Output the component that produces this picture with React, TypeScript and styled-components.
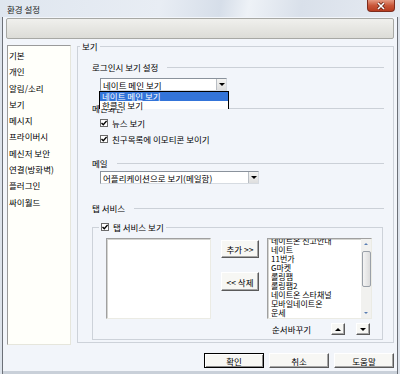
import React from 'react';
import styled, { createGlobalStyle } from 'styled-components';

const GlobalStyle = createGlobalStyle`
  html, body {
    margin: 0;
    padding: 0;
    background: #f2f5fa;
  }
  body {
    font-family: "Noto Sans CJK KR", "Noto Sans", sans-serif;
    font-size: 8.5px;
    color: #000;
  }
  * {
    box-sizing: border-box;
  }
`;

const Window = styled.div`
  width: 400px;
  height: 374px;
  display: flex;
  flex-direction: column;
  background: #f2f5fa;
  box-shadow: inset 2px 0 0 #dde3eb, inset 3px 0 0 #6c7077,
    inset -2px 0 0 #dde3eb, inset -3px 0 0 #6c7077, inset 0 -3px 0 #c9d0d9;
  overflow: hidden;
`;

const TitleBar = styled.div`
  height: 17px;
  display: flex;
  align-items: center;
  padding-left: 7px;
  background: linear-gradient(
    100deg,
    #dfe6ef 0%,
    #e8edf4 40%,
    #d6dee9 55%,
    #eef2f7 62%,
    #d9e0ea 75%,
    #e6ebf2 100%
  );
  color: #1c1c1c;
`;

const CloseButton = styled.div`
  margin-left: auto;
  margin-right: 5px;
  align-self: flex-start;
  width: 28px;
  height: 12px;
  border: 1px solid #7d2c1d;
  border-top: none;
  border-radius: 0 0 4px 4px;
  background: linear-gradient(#e59a83, #c9573a 50%, #b73b1f);
  display: flex;
  align-items: center;
  justify-content: center;
`;

const Banner = styled.div`
  height: 21px;
  margin: 1px 6px 0 6px;
  border: 1px solid #a7a8a4;
  border-radius: 2px;
  background: linear-gradient(#f0f0ed, #dcdcd7);
`;

const Body = styled.div`
  display: flex;
  align-items: flex-start;
  gap: 6px;
  padding-left: 7px;
  margin-top: 2px;
`;

const Sidebar = styled.div`
  width: 64px;
  height: 300px;
  margin-top: 4px;
  padding: 1px 1px;
  background: #fffffa;
  border: 1px solid;
  border-color: #9a9a9a #e6e6dc #e6e6dc #9a9a9a;
`;

const SideItem = styled.div`
  height: 16.3px;
  line-height: 16.3px;
  white-space: nowrap;
`;

const MainGroup = styled.fieldset`
  margin: 0;
  padding: 0 9px 0 2px;
  width: 317px;
  height: 302px;
  min-width: 0;
  border: 1px solid #cdd2d9;
`;

const Legend = styled.legend`
  padding: 0 2px;
  line-height: 10px;
  height: 10px;
  display: flex;
  align-items: center;
  gap: 4px;
`;

const Content = styled.div`
  display: flex;
  flex-direction: column;
  padding-left: 12px;
`;

const SectionHeader = styled.div<{ $top: number }>`
  display: flex;
  align-items: center;
  gap: 9px;
  height: 10px;
  margin-top: ${p => p.$top}px;
  white-space: nowrap;
`;

const Rule = styled.div`
  flex: 1;
  height: 1px;
  background: #cbd0d7;
`;

const ComboWrap = styled.div<{ $width: number; $top: number }>`
  position: relative;
  width: ${p => p.$width}px;
  margin-top: ${p => p.$top}px;
  margin-left: 8px;
`;

const Combo = styled.div`
  height: 13px;
  display: flex;
  align-items: center;
  background: #fff;
  border: 1px solid;
  border-color: #8a929c #d6dbe1 #d6dbe1 #8a929c;
  padding-left: 2px;
  white-space: nowrap;
`;

const ComboButton = styled.div`
  margin-left: auto;
  width: 10px;
  height: 100%;
  background: linear-gradient(#f4f4f2, #dedede);
  border-left: 1px solid #b9bec4;
  display: flex;
  align-items: center;
  justify-content: center;
`;

const Arrow = styled.span<{ $dir: 'up' | 'down'; $size: number; $color: string }>`
  width: 0;
  height: 0;
  border-left: ${p => p.$size}px solid transparent;
  border-right: ${p => p.$size}px solid transparent;
  ${p =>
    p.$dir === 'down'
      ? `border-top: ${p.$size}px solid ${p.$color};`
      : `border-bottom: ${p.$size}px solid ${p.$color};`}
`;

const DropList = styled.div`
  position: absolute;
  top: 13px;
  left: -1px;
  width: 130px;
  height: 18px;
  background: #fff;
  border: 1px solid #000;
  z-index: 2;
`;

const DropItem = styled.div<{ $selected?: boolean }>`
  height: 8px;
  line-height: 8px;
  padding-left: 2px;
  white-space: nowrap;
  background: ${p => (p.$selected ? '#3374d9' : '#fff')};
  color: ${p => (p.$selected ? '#fff' : '#000')};
  &:first-child {
    height: 9px;
    line-height: 9px;
  }
`;

const CheckRow = styled.div<{ $top: number }>`
  display: flex;
  align-items: center;
  gap: 4px;
  height: 10px;
  margin-top: ${p => p.$top}px;
  margin-left: 8px;
  white-space: nowrap;
`;

const CheckBox = styled.span`
  width: 8px;
  height: 8px;
  border: 1px solid #6b6b6b;
  background: #fff;
  display: flex;
  align-items: center;
  justify-content: center;
`;

const TabGroup = styled.fieldset`
  margin: 9px 0 0 0;
  padding: 0 0 0 6px;
  width: 291px;
  height: 118px;
  min-width: 0;
  align-self: flex-start;
  border: 1px solid #cdd2d9;
`;

const TabBody = styled.div`
  display: flex;
  align-items: flex-start;
  padding-left: 7px;
  margin-top: 6px;
`;

const ListBox = styled.div`
  width: 105px;
  height: 81px;
  background: #fff;
  border: 1px solid;
  border-color: #a0a0a0 #ebebe4 #ebebe4 #a0a0a0;
  box-shadow: inset 1px 1px 0 #d4d4d0;
  display: flex;
  overflow: hidden;
`;

const ButtonCol = styled.div`
  width: 38px;
  margin-left: 10px;
  margin-top: 2px;
  display: flex;
  flex-direction: column;
  gap: 14px;
`;

const Button = styled.div<{ $width?: number; $height: number; $default?: boolean }>`
  width: ${p => (p.$width ? `${p.$width}px` : '100%')};
  height: ${p => p.$height}px;
  display: flex;
  align-items: center;
  justify-content: center;
  white-space: nowrap;
  background: #f7f7f4;
  border: 1px solid;
  border-color: ${p => (p.$default ? '#000' : '#ffffff #5a5a5a #5a5a5a #ffffff')};
  box-shadow: ${p =>
    p.$default
      ? 'inset 1px 1px 0 #fff, inset -1px -1px 0 #8a8a8a'
      : 'inset -1px -1px 0 #a6a6a6'};
`;

const RightCol = styled.div`
  width: 105px;
  margin-left: 8px;
  display: flex;
  flex-direction: column;
`;

const Items = styled.div`
  flex: 1;
  padding-left: 3px;
  margin-top: -3px;
`;

const Item = styled.div`
  height: 9px;
  line-height: 9px;
  font-size: 8px;
  white-space: nowrap;
`;

const ScrollBar = styled.div`
  width: 10px;
  height: 100%;
  margin-top: 0;
  background: #f1f1ef;
  display: flex;
  flex-direction: column;
  align-items: center;
`;

const ScrollArrow = styled.div`
  height: 10px;
  width: 100%;
  display: flex;
  align-items: center;
  justify-content: center;
`;

const Thumb = styled.div`
  width: 9px;
  height: 36px;
  margin-top: 2px;
  border: 1px solid #9aa0a8;
  border-radius: 2px;
  background: linear-gradient(90deg, #f4f4f4, #dcdcdc);
`;

const Spacer = styled.div`
  flex: 1;
`;

const SortRow = styled.div`
  display: flex;
  align-items: center;
  height: 12px;
  margin-top: 4px;
  padding: 0 2px 0 5px;
  gap: 11px;
  white-space: nowrap;
`;

const SortLabel = styled.span`
  margin-right: auto;
`;

const Footer = styled.div`
  display: flex;
  justify-content: flex-end;
  gap: 5px;
  padding: 8px 6px 0 0;
`;

const sideItems = [
  '기본',
  '개인',
  '알림/소리',
  '보기',
  '메시지',
  '프라이버시',
  '메신저 보안',
  '연결(방화벽)',
  '플러그인',
  '싸이월드',
];

const tabItems = [
  '네이트온 신고안내',
  '네이트',
  '11번가',
  'G마켓',
  '롤링팸',
  '롤링팸2',
  '네이트온 스타채널',
  '모바일네이트온',
  '운세',
];

function Check() {
  return (
    <CheckBox>
      <svg width="6" height="6" viewBox="0 0 6 6">
        <path d="M0.5 3 L2.3 4.8 L5.6 1" fill="none" stroke="#000" strokeWidth="1.4" />
      </svg>
    </CheckBox>
  );
}

export default function App(): JSX.Element {
  return (
    <>
      <GlobalStyle />
      <Window>
        <TitleBar>
          환경 설정
          <CloseButton>
            <svg width="10" height="8" viewBox="0 0 10 8">
              <path d="M2 1 L8 7 M8 1 L2 7" stroke="#5a1a10" strokeWidth="3" />
              <path d="M2 1 L8 7 M8 1 L2 7" stroke="#fff" strokeWidth="1.6" />
            </svg>
          </CloseButton>
        </TitleBar>
        <Banner />

        <Body>
          <Sidebar>
            {sideItems.map(item => (
              <SideItem key={item}>{item}</SideItem>
            ))}
          </Sidebar>

          <MainGroup>
            <Legend>보기</Legend>
            <Content>
              <SectionHeader $top={11}>
                로그인시 보기 설정
                <Rule />
              </SectionHeader>
              <ComboWrap $width={127} $top={6}>
                <Combo>
                  네이트 메인 보기
                  <ComboButton>
                    <Arrow $dir="down" $size={3} $color="#000" />
                  </ComboButton>
                </Combo>
                <DropList>
                  <DropItem $selected>네이트 메인 보기</DropItem>
                  <DropItem>한클릭 보기</DropItem>
                </DropList>
              </ComboWrap>

              <SectionHeader $top={12}>
                메인화면
                <Rule />
              </SectionHeader>
              <CheckRow $top={5}>
                <Check />
                뉴스 보기
              </CheckRow>
              <CheckRow $top={6}>
                <Check />
                친구목록에 이모티콘 보이기
              </CheckRow>

              <SectionHeader $top={14}>
                메일
                <Rule />
              </SectionHeader>
              <ComboWrap $width={159} $top={3}>
                <Combo>
                  어플리케이션으로 보기(메일함)
                  <ComboButton>
                    <Arrow $dir="down" $size={3} $color="#000" />
                  </ComboButton>
                </Combo>
              </ComboWrap>

              <SectionHeader $top={19}>
                탭 서비스
                <Rule />
              </SectionHeader>

              <TabGroup>
                <Legend>
                  <Check />
                  탭 서비스 보기
                </Legend>
                <TabBody>
                  <ListBox />
                  <ButtonCol>
                    <Button $height={18}>추가 &gt;&gt;</Button>
                    <Button $height={19}>&lt;&lt; 삭제</Button>
                  </ButtonCol>
                  <RightCol>
                    <ListBox>
                      <Items>
                        {tabItems.map(item => (
                          <Item key={item}>{item}</Item>
                        ))}
                      </Items>
                      <ScrollBar>
                        <ScrollArrow>
                          <Arrow $dir="up" $size={2} $color="#5a7eb3" />
                        </ScrollArrow>
                        <Thumb />
                        <Spacer />
                        <ScrollArrow>
                          <Arrow $dir="down" $size={2} $color="#5a7eb3" />
                        </ScrollArrow>
                      </ScrollBar>
                    </ListBox>
                    <SortRow>
                      <SortLabel>순서바꾸기</SortLabel>
                      <Button $width={14} $height={12}>
                        <Arrow $dir="up" $size={3} $color="#000" />
                      </Button>
                      <Button $width={14} $height={12}>
                        <Arrow $dir="down" $size={3} $color="#000" />
                      </Button>
                    </SortRow>
                  </RightCol>
                </TabBody>
              </TabGroup>
            </Content>
          </MainGroup>
        </Body>

        <Footer>
          <Button $width={60} $height={15} $default>
            확인
          </Button>
          <Button $width={60} $height={15}>
            취소
          </Button>
          <Button $width={60} $height={15}>
            도움말
          </Button>
        </Footer>
      </Window>
    </>
  );
}
